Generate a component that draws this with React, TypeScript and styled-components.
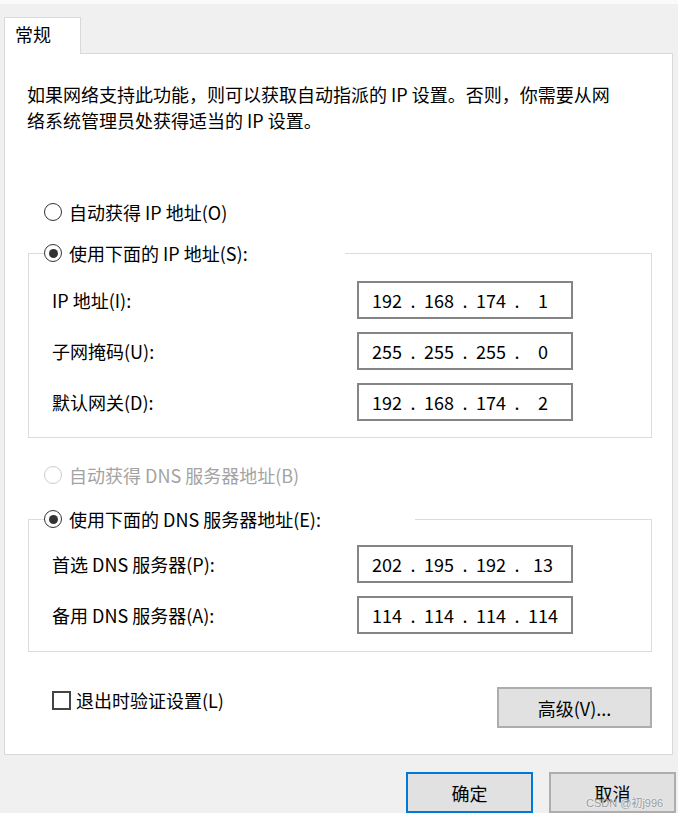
import { Fragment } from "react";
import styled, { createGlobalStyle } from "styled-components";

const GlobalStyle = createGlobalStyle`
  html, body {
    margin: 0;
    padding: 0;
    background: #f0f0f0;
  }
  body {
    font-family: "Noto Sans CJK SC", "Microsoft YaHei", sans-serif;
    font-size: 18px;
    color: #000;
  }
  * {
    box-sizing: border-box;
  }
`;

const Dialog = styled.div`
  position: relative;
  width: 678px;
  height: 813px;
  overflow: hidden;
  border-top: 4px solid #fafafa;
  padding: 13px 2px 0 4px;
`;

const Tab = styled.div`
  position: relative;
  z-index: 1;
  width: 77px;
  height: 37px;
  margin-bottom: -1px;
  padding-left: 10px;
  line-height: 33px;
  background: #fff;
  border: 1px solid #d9d9d9;
  border-bottom: none;
`;

const Panel = styled.div`
  width: 669px;
  height: 702px;
  background: #fff;
  border: 1px solid #d9d9d9;
  padding: 0 20px 0 23px;
  display: flex;
  flex-direction: column;
`;

const Intro = styled.p`
  margin: 27px 0 0 -1px;
  line-height: 26px;
  white-space: nowrap;
`;

const OptionRow = styled.label<{ $top: number; $disabled?: boolean }>`
  display: flex;
  align-items: center;
  gap: 7px;
  height: 26px;
  margin-top: ${p => p.$top}px;
  padding-left: 16px;
  color: ${p => (p.$disabled ? "#a3a3a3" : "#000")};
`;

const Radio = styled.span<{ $checked?: boolean; $disabled?: boolean }>`
  position: relative;
  flex: none;
  width: 18px;
  height: 18px;
  border-radius: 50%;
  border: 1.5px solid ${p => (p.$disabled ? "#cccccc" : "#333")};
  background: #fff;
  &::after {
    content: "";
    display: ${p => (p.$checked ? "block" : "none")};
    position: absolute;
    left: 50%;
    top: 50%;
    width: 9px;
    height: 9px;
    margin: -4.5px 0 0 -4.5px;
    border-radius: 50%;
    background: #333;
  }
`;

const Group = styled.fieldset<{ $top: number; $bottom: number }>`
  margin: ${p => p.$top}px 0 0 0;
  padding: 0 0 ${p => p.$bottom}px 15px;
  min-width: 0;
  border: 1px solid #dcdcdc;
`;

const GroupCaption = styled.legend<{ $width: number }>`
  display: flex;
  align-items: center;
  gap: 7px;
  width: ${p => p.$width}px;
  height: 26px;
  padding: 0;
`;

const Fields = styled.div<{ $top: number }>`
  display: flex;
  flex-direction: column;
  gap: 13px;
  padding: ${p => p.$top}px 0 0 8px;
`;

const FieldRow = styled.div`
  display: flex;
  align-items: center;
  height: 38px;
`;

const FieldLabel = styled.span`
  width: 305px;
  flex: none;
`;

const IpBox = styled.div`
  display: flex;
  align-items: center;
  width: 216px;
  height: 38px;
  padding-left: 8px;
  border: 2px solid #858585;
  background: #fff;
`;

const Octet = styled.span`
  width: 40px;
  text-align: center;
`;

const Dot = styled.span`
  width: 12px;
  text-align: center;
`;

const BottomRow = styled.div`
  display: flex;
  justify-content: space-between;
  align-items: flex-start;
  margin-top: 35px;
`;

const CheckRow = styled.label`
  display: flex;
  align-items: center;
  gap: 5px;
  height: 26px;
  padding-left: 24px;
`;

const CheckBox = styled.span`
  flex: none;
  width: 19px;
  height: 19px;
  border: 2px solid #444;
  background: #fff;
`;

const Button = styled.button<{ $width: number; $primary?: boolean }>`
  width: ${p => p.$width}px;
  height: 41px;
  padding: 0;
  font: inherit;
  color: #000;
  background: #e1e1e1;
  border: 2px solid ${p => (p.$primary ? "#0078d7" : "#adadad")};
`;

const Footer = styled.div`
  display: flex;
  justify-content: flex-end;
  gap: 16px;
  margin-top: 17px;
`;

// CSDN watermark stamped over the bottom-right corner
const Watermark = styled.span`
  position: absolute;
  left: 586px;
  top: 790px;
  font-family: "Liberation Sans", "Noto Sans CJK SC", sans-serif;
  font-size: 11px;
  color: #9c9c9c;
  text-shadow: 0 0 2px #fff;
  pointer-events: none;
`;

const IpField = ({ value }: { value: string[] }) => (
  <IpBox>
    {value.map((part, i) => (
      <Fragment key={i}>
        <Octet>{part}</Octet>
        {i < 3 && <Dot>.</Dot>}
      </Fragment>
    ))}
  </IpBox>
);

const ipRows = [
  { label: "IP 地址(I):", value: ["192", "168", "174", "1"] },
  { label: "子网掩码(U):", value: ["255", "255", "255", "0"] },
  { label: "默认网关(D):", value: ["192", "168", "174", "2"] },
];

const dnsRows = [
  { label: "首选 DNS 服务器(P):", value: ["202", "195", "192", "13"] },
  { label: "备用 DNS 服务器(A):", value: ["114", "114", "114", "114"] },
];

const App = () => {
  return (
    <Dialog>
      <GlobalStyle />
      <Tab>常规</Tab>
      <Panel>
        <Intro>
          如果网络支持此功能，则可以获取自动指派的 IP 设置。否则，你需要从网
          <br />
          络系统管理员处获得适当的 IP 设置。
        </Intro>

        <OptionRow $top={66}>
          <Radio />
          自动获得 IP 地址(O)
        </OptionRow>
        <Group $top={15} $bottom={16}>
          <GroupCaption $width={301}>
            <Radio $checked />
            使用下面的 IP 地址(S):
          </GroupCaption>
          <Fields $top={15}>
            {ipRows.map(row => (
              <FieldRow key={row.label}>
                <FieldLabel>{row.label}</FieldLabel>
                <IpField value={row.value} />
              </FieldRow>
            ))}
          </Fields>
        </Group>

        <OptionRow $top={24} $disabled>
          <Radio $disabled />
          自动获得 DNS 服务器地址(B)
        </OptionRow>
        <Group $top={18} $bottom={17}>
          <GroupCaption $width={371}>
            <Radio $checked />
            使用下面的 DNS 服务器地址(E):
          </GroupCaption>
          <Fields $top={13}>
            {dnsRows.map(row => (
              <FieldRow key={row.label}>
                <FieldLabel>{row.label}</FieldLabel>
                <IpField value={row.value} />
              </FieldRow>
            ))}
          </Fields>
        </Group>

        <BottomRow>
          <CheckRow>
            <CheckBox />
            退出时验证设置(L)
          </CheckRow>
          <Button $width={155}>高级(V)...</Button>
        </BottomRow>
      </Panel>
      <Footer>
        <Button $width={127} $primary>确定</Button>
        <Button $width={127}>取消</Button>
      </Footer>
      <Watermark>CSDN @初j996</Watermark>
    </Dialog>
  );
};

export default App;
